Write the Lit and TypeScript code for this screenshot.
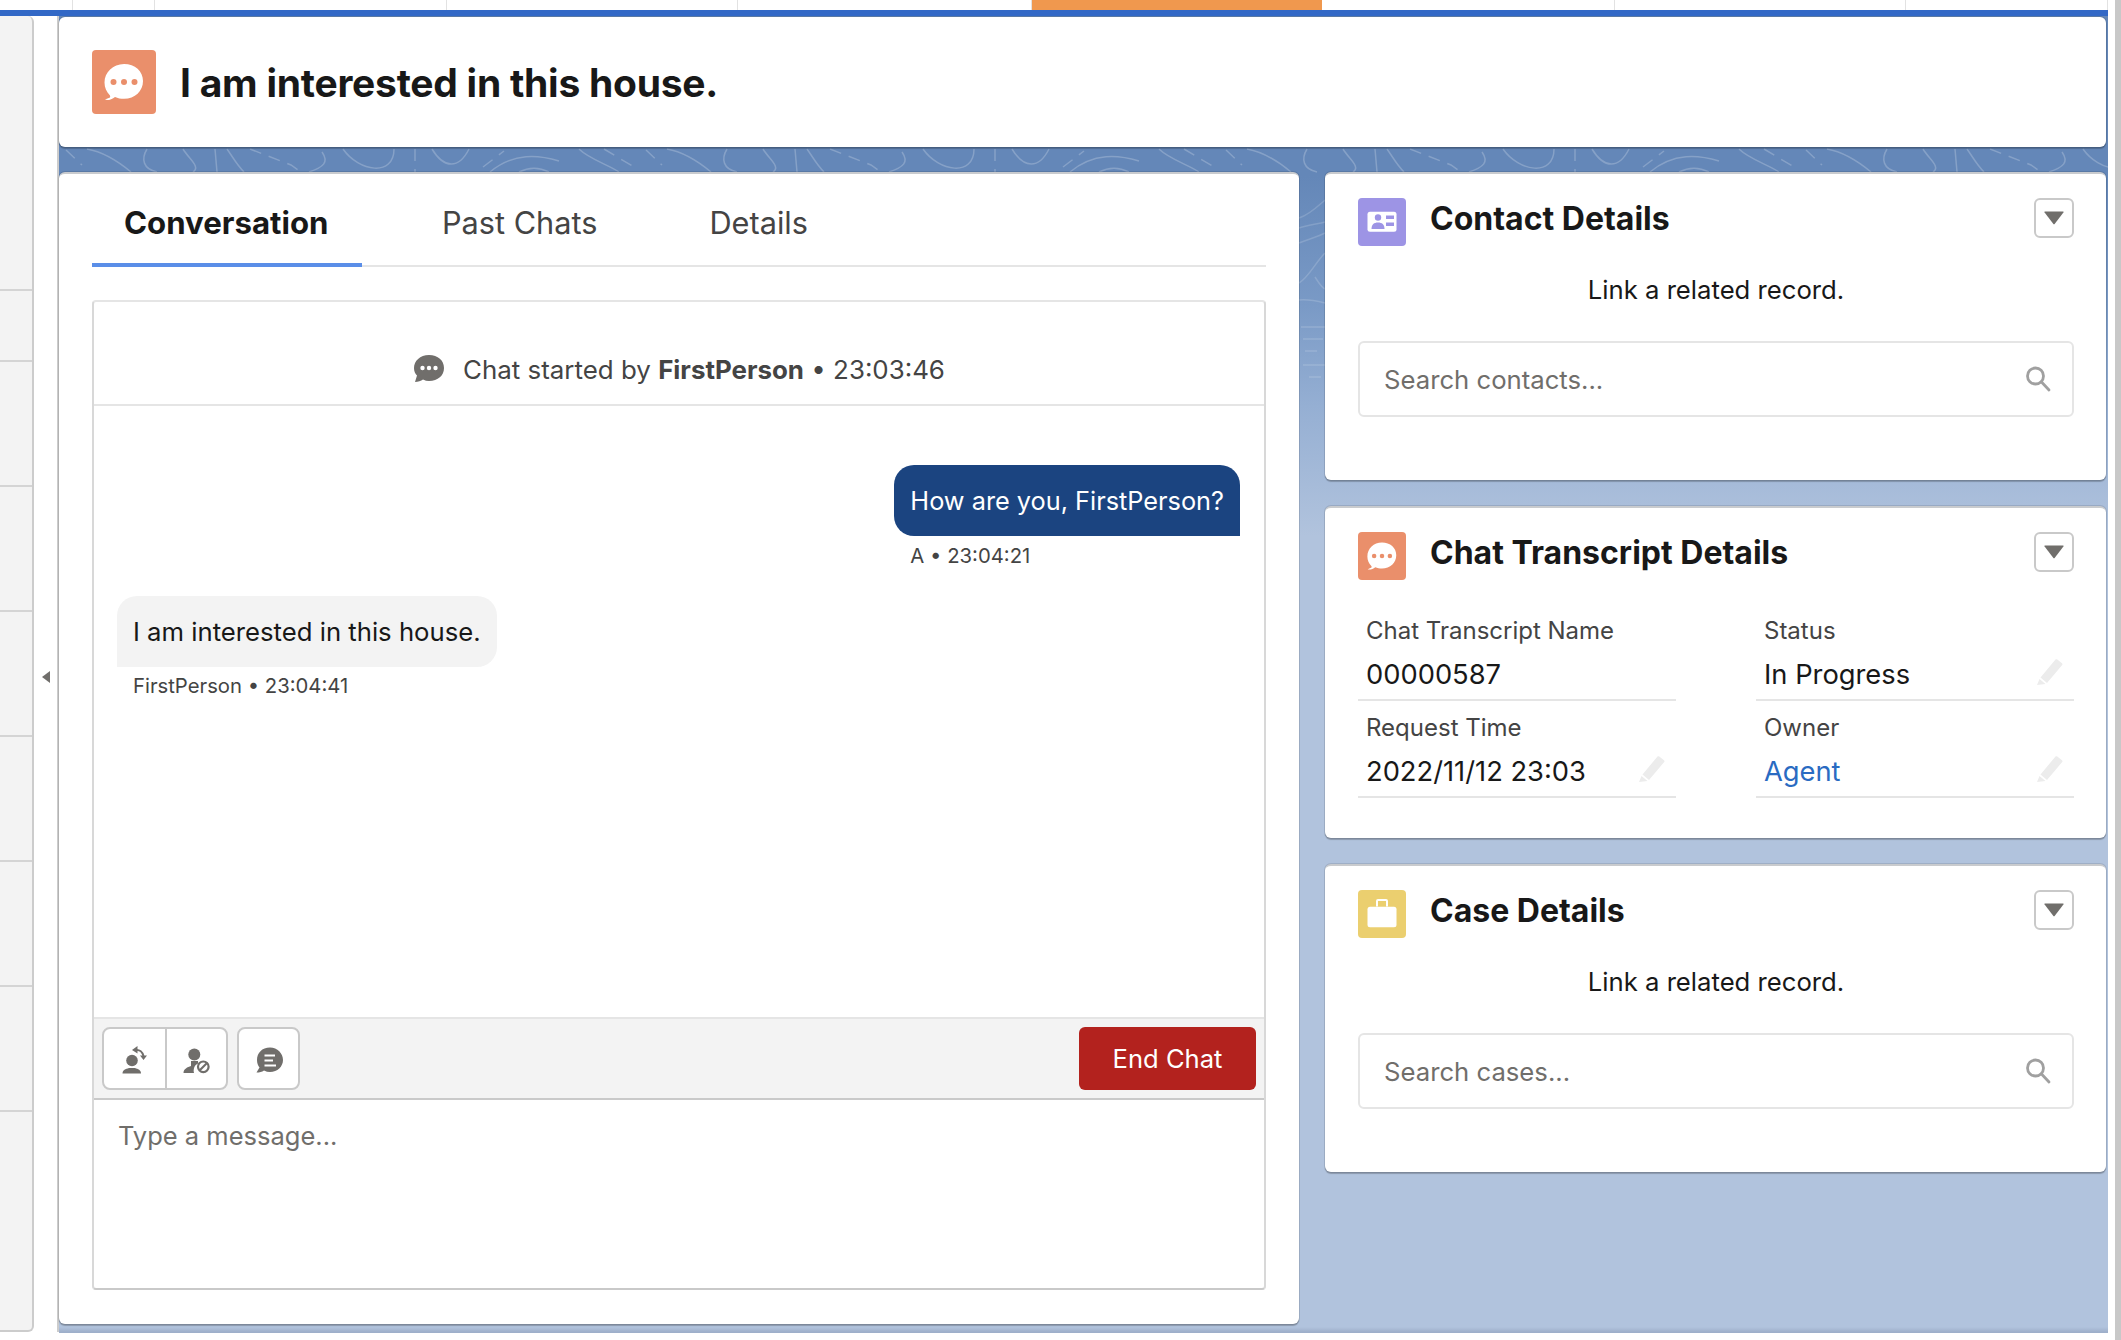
import { LitElement, html, css, svg } from 'lit';
import { customElement } from 'lit/decorators.js';

const bubblePath = 'M32 14c-11 0-19.500 8.300-19.500 18.500 0 5 2 9.500 5.300 12.800.5.600.5 1.400.2 2.100L13 49.600c2 .9 7 .2 10-2.700 2.800 1.200 5.800 1.900 9 1.900 11 0 19-7.800 19-17.800S43 14 32 14z';

const chatIcon = (size: number) => html`<svg viewBox="0 0 64 64" width=${size} height=${size}>
  <path fill="#fff" d=${bubblePath}/>
  <circle cx="21.500" cy="32" r="3" fill="#ea8f6b"/><circle cx="32" cy="32" r="3" fill="#ea8f6b"/><circle cx="42.500" cy="32" r="3" fill="#ea8f6b"/>
</svg>`;

const contactIcon = html`<svg viewBox="0 0 48 48" width="48" height="48">
  <rect x="9.500" y="13.700" width="29" height="20" rx="2.500" fill="#fff"/>
  <circle cx="20" cy="19.500" r="3.200" fill="#9d94e5"/>
  <path fill="#9d94e5" d="M13.500 31c0-4.500 2.500-6.500 6.500-6.500s6.500 2 6.500 6.500z"/>
  <rect x="28" y="17.500" width="8" height="3.500" fill="#9d94e5"/><rect x="28" y="24.500" width="8" height="3.500" fill="#9d94e5"/>
</svg>`;

const caseIcon = html`<svg viewBox="0 0 48 48" width="48" height="48">
  <path fill="none" stroke="#fff" stroke-width="2" d="M19 16.500v-5.500q0-1 1-1h8q1 0 1 1v5.500"/>
  <rect x="9.500" y="16.700" width="29" height="20.600" rx="2.500" fill="#fff"/>
</svg>`;

const caret = html`<svg viewBox="0 0 20 14" width="20" height="14"><path fill="#706e6b" d="M1 .5h18q1 0 .4 1L10.800 12.800q-.8 1-1.600 0L.6 1.500Q0 .5 1 .5z"/></svg>`;

const searchIcon = html`<svg viewBox="0 0 26 26" width="26" height="26" fill="none" stroke="#a0a0a0" stroke-width="2.800">
  <circle cx="10.500" cy="10" r="8"/><path stroke-linecap="round" d="M16.500 16l7.500 8"/>
</svg>`;

const pencil = html`<svg viewBox="0 0 26 26" width="26" height="26"><path fill="#ececec" d="M18.500.5c.6-.5 1.200-.5 1.800 0l4.700 3.700c.6.500.7 1.200.2 1.800L10 24 3.500 18.500zM2.500 20l6 5L0 26z"/></svg>`;

const transferIcon = html`<svg viewBox="0 0 32 32" width="32" height="32">
  <circle cx="13" cy="17.500" r="5.800" fill="#706e6b"/>
  <path fill="#706e6b" d="M3.500 30.500c0-3.500 3-4.500 6.500-5.500h6c3 1 6 2 6 5.500z"/>
  <path fill="none" stroke="#706e6b" stroke-width="2" d="M17 7c3.500-.5 6.500 2 7.500 6"/>
  <path fill="#706e6b" d="M18.500 3v7.500l-5.500-3.500zM21 12.500h7l-3.500 4.500z"/>
</svg>`;

const blockIcon = html`<svg viewBox="0 0 32 32" width="32" height="32">
  <circle cx="13.300" cy="11.500" r="6" fill="#706e6b"/>
  <path fill="#706e6b" d="M2.500 30c0-4 4-6 7.500-7v-5h7v2.500c-3.500 1.500-5 5.500-4 9.500z"/>
  <circle cx="22.300" cy="23.800" r="5.300" fill="none" stroke="#706e6b" stroke-width="2.200"/>
  <path stroke="#706e6b" stroke-width="2.200" d="M18.500 27.500l7.500-7.500"/>
</svg>`;

const chatLinesIcon = html`<svg viewBox="0 0 32 32" width="32" height="32">
  <path fill="#706e6b" d="M17 4.500C9 4.500 4 10 4 17c0 3 1 5.500 2.500 7.500l-3 5c3 0 5.500-.5 7.500-2 2 1 4 1.500 6 1.500 7.500 0 13-5.500 13-12S24.500 4.500 17 4.500z"/>
  <path stroke="#fff" stroke-width="2.200" d="M11.500 12.500H22M11.500 17.500h8.500M11.500 22.500H23"/>
</svg>`;

// contour lines in the band under the header, the tile repeats along the width
const topoTile = [
  'M28 2C45 5 60 15 72 25', 'M88 2C82 12 84 22 98 25', 'M124 2C130 12 142 20 134 25', 'M156 2L158 25',
  'M168 2C175 12 178 18 185 25', 'M263 5C270 15 265 20 250 25', 'M284 2C300 25 335 30 335 2',
  'M373 2C385 22 400 22 410 2', 'M431 25C455 5 480 8 500 14', 'M460 25C470 20 480 20 490 25', 'M520 2C530 12 550 18 560 25',
];
const topoDashed = ['M7 3L23 18', 'M191 2L232 18L242 25', 'M356 2L356 25', 'M424 20L445 4', 'M545 2L575 20'];
const gutterLines = [
  'M1240 71C1250 68 1258 60 1266 53', 'M1240 81C1250 78 1258 77 1266 75', 'M1240 96C1250 92 1258 90 1266 86',
  'M1240 136C1250 130 1256 116 1266 106', 'M1256 130C1260 136 1262 140 1266 142', 'M1240 153C1250 152 1258 154 1266 156',
  'M1242 180H1266', 'M1244 192H1264', 'M1246 204H1258', 'M1244 218H1266', 'M1250 230H1262',
];

const sidebarRows = [275, 71, 125, 125, 125, 125, 125, 125];

@customElement('app-root')
export class AppRoot extends LitElement {
  static styles = css`
    :host {
      display: block;
      width: 2121px;
      height: 1340px;
      overflow: hidden;
      box-sizing: border-box;
      background: #fff;
      border-right: 6px solid #c8c8c8;
      font-family: Inter, "Noto Sans", sans-serif;
      color: #181818;
    }

    .topnav { display: flex; height: 10px; width: 2108px; }
    .topnav div { border-right: 1.500px solid #e2e2e2; box-sizing: border-box; }
    .topnav .active { background: #f0984e; border-right: none; }

    .bluebar { height: 6px; width: 2108px; background: #3268c6; }

    .main { display: flex; height: 1317px; }

    .sidebar {
      width: 32px;
      height: 1314px;
      background: #f3f3f3;
      border-right: 2px solid #ccc;
      border-bottom: 2px solid #ccc;
      border-radius: 0 6px 6px 0;
      flex: none;
    }
    .sidebar div { box-sizing: border-box; border-bottom: 2px solid #d4d4d4; }

    .strip {
      width: 25px;
      flex: none;
      border-right: 2px solid #ccc;
      display: flex;
      align-items: center;
      justify-content: center;
      height: 1316px;
      box-sizing: border-box;
    }
    .strip .arrow {
      width: 0; height: 0;
      margin-top: 6px;
      border-top: 6px solid transparent;
      border-bottom: 6px solid transparent;
      border-right: 8px solid #706e6b;
    }

    .workspace {
      position: relative;
      width: 2049px;
      flex: none;
      height: 1317px;
      padding: 1px 2px 0 0;
      box-sizing: border-box;
      background: linear-gradient(180deg, #6487b8 0, #6487b8 160px, #7a9ac6 290px, #95afd3 390px, #b1c3dd 520px, #b1c3dd 1311px, #9eafca 1316px);
    }
    .topo { position: absolute; left: 0; top: 131px; pointer-events: none; }
    .content { position: relative; display: flex; flex-direction: column; height: 100%; }

    .card {
      background: #fff;
      border-radius: 6px;
      box-shadow: 0 2px 1px rgba(0, 0, 0, 0.22), 0 0 0 1px rgba(0, 0, 0, 0.1);
    }

    .head-card {
      height: 130px;
      display: flex;
      align-items: center;
      padding-left: 33px;
      gap: 24px;
      flex: none;
    }
    .icon-box {
      flex: none;
      border-radius: 4px;
      display: flex;
      align-items: center;
      justify-content: center;
    }
    .chat-bg { background: #ea8f6b; }
    .contact-bg { background: #9d94e5; }
    .case-bg { background: #ebcf6f; }
    .head-card .icon-box { width: 64px; height: 64px; }
    h1 { margin: 0; font-size: 39px; font-weight: 700; letter-spacing: -0.25px; }

    .columns { display: flex; gap: 26px; margin-top: 25px; flex: 1; min-height: 0; }

    .conv {
      width: 1240px;
      height: 1152px;
      padding: 0 33px;
      box-sizing: border-box;
      display: flex;
      flex-direction: column;
      flex: none;
      border-top: 2px solid #c9cbce;
    }

    .tabs {
      display: flex;
      height: 93px;
      flex: none;
      border-bottom: 2px solid #e5e5e5;
      box-sizing: border-box;
      font-size: 30.700px;
      color: #444;
    }
    .tab { display: flex; align-items: center; padding: 5px 0 0; box-sizing: border-box; }
    .tab.active {
      width: 270px;
      padding: 8px 0 0 32px;
      color: #181818;
      font-size: 31.200px;
      font-weight: 700;
      border-bottom: 4px solid #5a8ee8;
      margin-bottom: -2px;
    }
    .tab.past { margin-left: 80px; }
    .tab.details { margin-left: 112px; }

    .chatbox {
      margin-top: 33px;
      height: 990px;
      border: 2px solid #e5e5e5;
      border-bottom-color: #c9c9c9;
      border-left-color: #d8d8d8;
      border-right-color: #d8d8d8;
      border-radius: 4px;
      box-sizing: border-box;
      display: flex;
      flex-direction: column;
    }
    .chat-start {
      height: 104px;
      flex: none;
      box-sizing: border-box;
      padding-top: 32px;
      border-bottom: 2px solid #e5e5e5;
      display: flex;
      align-items: center;
      justify-content: center;
      gap: 18px;
      font-size: 25.900px;
      color: #444;
    }
    .chat-start svg { flex: none; }
    .chat-start b { font-weight: 700; }

    .messages { flex: 1; display: flex; flex-direction: column; padding: 59px 24px 0; min-height: 0; }
    .msg { display: flex; flex-direction: column; }
    .msg.out { align-self: flex-end; }
    .msg.in { align-self: flex-start; margin-top: 26px; }
    .bubble {
      line-height: 71px;
      height: 71px;
      padding: 0 16px;
      border-radius: 20px;
      white-space: nowrap;
    }
    .out .bubble { font-size: 25.300px; background: #1b4480; color: #fff; border-bottom-right-radius: 0; }
    .in .bubble { font-size: 25.700px; background: #f3f3f3; border-bottom-left-radius: 0; margin-left: -1px; }
    .meta { font-size: 20.300px; color: #444; padding: 6px 16px 0; line-height: 28px; }
    .in .meta { padding-left: 15px; padding-top: 5px; }

    .toolbar {
      height: 83px;
      flex: none;
      box-sizing: border-box;
      background: #f3f3f3;
      border-top: 2px solid #e5e5e5;
      border-bottom: 2px solid #c9c9c9;
      display: flex;
      align-items: center;
      padding: 0 8px;
      gap: 9px;
    }
    .btn-group, .btn-single {
      display: flex;
      height: 63px;
      background: #fff;
      border: 2px solid #c9c9c9;
      border-radius: 8px;
      box-sizing: border-box;
    }
    .btn-group span, .btn-single span { display: flex; align-items: center; justify-content: center; width: 61px; box-sizing: border-box; }
    .btn-single span { width: 59px; }
    .btn-group span + span { border-left: 2px solid #c9c9c9; }
    .end-chat {
      margin-left: auto;
      width: 177px;
      height: 63px;
      border-radius: 6px;
      background: #b3221e;
      color: #fff;
      font-size: 25.600px;
      display: flex;
      align-items: center;
      justify-content: center;
    }

    .composer { flex: none; height: 188px; box-sizing: border-box; padding: 19px 24px; font-size: 25.500px; line-height: 34px; color: #706e6b; }

    .side { display: flex; flex-direction: column; width: 781px; gap: 26px; flex: none; }
    .side .card { box-sizing: border-box; padding: 24px 32px 0 33px; border-top: 2px solid #c9cbce; }
    .contact { height: 308px; }
    .transcript { height: 332px; }
    .case { height: 308px; }

    .side-head { display: flex; height: 48px; gap: 24px; }
    .side-head .icon-box { width: 48px; height: 48px; }
    h2 { margin: 0; padding-top: 1px; flex: 1; font-size: 32px; line-height: 40px; font-weight: 700; }
    .collapse {
      width: 40px;
      height: 40px;
      flex: none;
      box-sizing: border-box;
      border: 2px solid #c9c9c9;
      border-radius: 6px;
      display: flex;
      align-items: center;
      justify-content: center;
    }

    .link-text { text-align: center; font-size: 25.700px; line-height: 34px; margin-top: 27px; }
    .search {
      margin-top: 34px;
      height: 76px;
      box-sizing: border-box;
      border: 2px solid #e5e5e5;
      border-radius: 6px;
      display: flex;
      align-items: center;
      justify-content: space-between;
      padding: 0 21px 0 24px;
      font-size: 25.700px;
      color: #706e6b;
    }

    .fields { display: grid; grid-template-columns: 318px 318px; column-gap: 80px; row-gap: 12px; margin-top: 36px; }
    .field { position: relative; height: 85px; box-sizing: border-box; padding-left: 8px; border-bottom: 2px solid #e5e5e5; }
    .field label { display: block; font-size: 24px; line-height: 30px; color: #444; }
    .field .value { font-size: 27.300px; line-height: 36px; margin-top: 11px; }
    .field .value.link { color: #2a6bc2; }
    .field svg { position: absolute; right: 11px; bottom: 14px; }
  `;

  private renderField(label: string, value: string, editable = true, link = false) {
    return html`<div class="field">
      <label>${label}</label>
      <div class="value ${link ? 'link' : ''}">${value}</div>
      ${editable ? pencil : ''}
    </div>`;
  }

  private renderTopo() {
    const tiles = [0, 1, 2, 3];
    return html`<svg class="topo" width="2049" height="400" viewBox="0 0 2049 400" fill="none" stroke="#fff" stroke-opacity="0.22" stroke-width="1.500">
      ${tiles.map((i) => svg`<g transform="translate(${i * 580} 0)">
        ${topoTile.map((d) => svg`<path d=${d} />`)}
        ${topoDashed.map((d) => svg`<path d=${d} stroke-dasharray="12 8" />`)}
      </g>`)}
      ${gutterLines.map((d) => svg`<path d=${d} stroke-opacity="0.16" />`)}
    </svg>`;
  }

  render() {
    return html`
      <div class="topnav">
        ${[73, 82, 292, 291, 294].map((w) => html`<div style="width:${w}px"></div>`)}
        <div class="active" style="width:290px"></div>
        ${[293, 291, 202].map((w) => html`<div style="width:${w}px"></div>`)}
      </div>
      <div class="bluebar"></div>
      <div class="main">
        <div class="sidebar">
          ${sidebarRows.map((h) => html`<div style="height:${h}px"></div>`)}
        </div>
        <div class="strip"><div class="arrow"></div></div>
        <div class="workspace">
          ${this.renderTopo()}
          <div class="content">
            <div class="card head-card">
              <div class="icon-box chat-bg">${chatIcon(64)}</div>
              <h1>I am interested in this house.</h1>
            </div>
            <div class="columns">
              <section class="card conv">
                <div class="tabs">
                  <div class="tab active">Conversation</div>
                  <div class="tab past">Past Chats</div>
                  <div class="tab details">Details</div>
                </div>
                <div class="chatbox">
                  <div class="chat-start">
                    <svg viewBox="0 0 32 28" width="32" height="28">
                      <path fill="#706e6b" d="M16 0C7 0 1 6 1 13c0 3 1 5.500 3 7.500L2 27c3 0 6-1 8-2.500 2 1 4 1.500 6 1.500 9 0 15-5.500 15-13S25 0 16 0z"/>
                      <circle cx="9.500" cy="13" r="2.200" fill="#fff"/><circle cx="16" cy="13" r="2.200" fill="#fff"/><circle cx="22.500" cy="13" r="2.200" fill="#fff"/>
                    </svg>
                    <span>Chat started by <b>FirstPerson</b> • 23:03:46</span>
                  </div>
                  <div class="messages">
                    <div class="msg out">
                      <div class="bubble">How are you, FirstPerson?</div>
                      <div class="meta">A • 23:04:21</div>
                    </div>
                    <div class="msg in">
                      <div class="bubble">I am interested in this house.</div>
                      <div class="meta">FirstPerson • 23:04:41</div>
                    </div>
                  </div>
                  <div class="toolbar">
                    <div class="btn-group"><span>${transferIcon}</span><span>${blockIcon}</span></div>
                    <div class="btn-single"><span>${chatLinesIcon}</span></div>
                    <div class="end-chat">End Chat</div>
                  </div>
                  <div class="composer">Type a message...</div>
                </div>
              </section>
              <div class="side">
                <section class="card contact">
                  <div class="side-head">
                    <div class="icon-box contact-bg">${contactIcon}</div>
                    <h2>Contact Details</h2>
                    <div class="collapse">${caret}</div>
                  </div>
                  <div class="link-text">Link a related record.</div>
                  <div class="search"><span>Search contacts...</span>${searchIcon}</div>
                </section>
                <section class="card transcript">
                  <div class="side-head">
                    <div class="icon-box chat-bg">${chatIcon(48)}</div>
                    <h2>Chat Transcript Details</h2>
                    <div class="collapse">${caret}</div>
                  </div>
                  <div class="fields">
                    ${this.renderField('Chat Transcript Name', '00000587', false)}
                    ${this.renderField('Status', 'In Progress')}
                    ${this.renderField('Request Time', '2022/11/12 23:03')}
                    ${this.renderField('Owner', 'Agent', true, true)}
                  </div>
                </section>
                <section class="card case">
                  <div class="side-head">
                    <div class="icon-box case-bg">${caseIcon}</div>
                    <h2>Case Details</h2>
                    <div class="collapse">${caret}</div>
                  </div>
                  <div class="link-text">Link a related record.</div>
                  <div class="search"><span>Search cases...</span>${searchIcon}</div>
                </section>
              </div>
            </div>
          </div>
        </div>
      </div>
    `;
  }
}
